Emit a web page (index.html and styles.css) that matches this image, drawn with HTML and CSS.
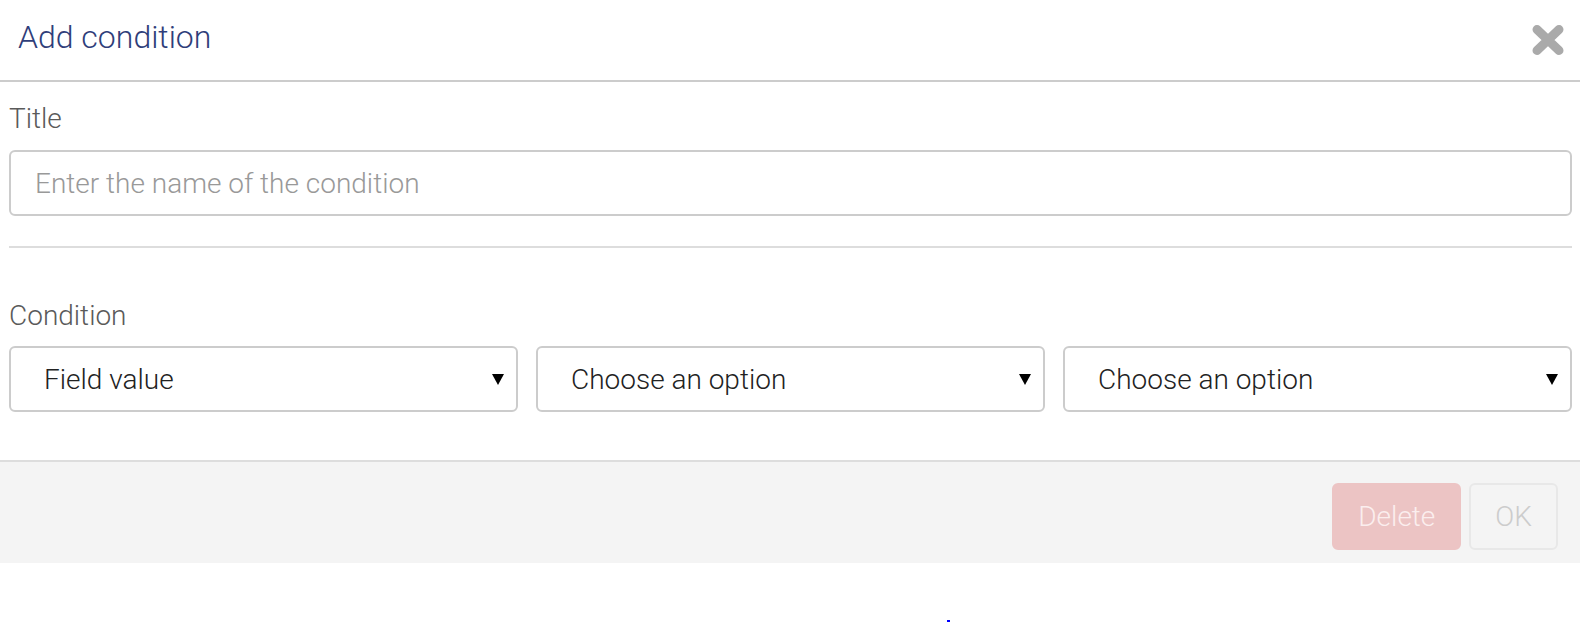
FILE: index.html
```html
<!DOCTYPE html>
<html lang="en">
<head>
  <meta charset="UTF-8">
  <meta name="viewport" content="width=device-width, initial-scale=1.0">
  <title>Add condition</title>
  <link rel="stylesheet" href="styles.css">
</head>
<body>

  <div class="modal">
    <div class="modal-header">
      <h2>Add condition</h2>
      <button class="close" title="Close">
        <svg width="32" height="30" viewBox="0 0 32 30">
          <path d="M5 4.5 L27 25.5 M27 4.5 L5 25.5" stroke="#aaa" stroke-width="9" stroke-linecap="round"/>
        </svg>
      </button>
    </div>

    <div class="modal-body">
      <label class="field-label" for="condTitle">Title</label>
      <input class="field" id="condTitle" type="text" placeholder="Enter the name of the condition">

      <hr class="sep">

      <label class="field-label">Condition</label>
      <div class="selects">
        <div class="select">Field value<span class="arrow"></span></div>
        <div class="select">Choose an option<span class="arrow"></span></div>
        <div class="select">Choose an option<span class="arrow"></span></div>
      </div>
    </div>

    <!-- Tombol bawah -->
    <div class="modal-footer">
      <button class="btn btn-delete">Delete</button>
      <button class="btn btn-ok">OK</button>
    </div>
  </div>

  <a class="dot" href="#"></a>

</body>
</html>
```

FILE: styles.css
```css
body {
  font-family: Roboto, "Noto Sans", sans-serif;
  font-weight: 300;
  margin: 0;
  padding: 0;
  background-color: #fff;
}

.modal-header {
  display: flex;
  align-items: center;
  justify-content: space-between;
  box-sizing: border-box;
  height: 82px;
  padding: 0 16px 6px 18px;
  border-bottom: 2px solid #ccc;
}

.modal-header h2 {
  margin: 0;
  font-size: 32px;
  font-weight: 300;
  color: #2f3e7a;
}

.close {
  background: none;
  border: none;
  padding: 0;
  margin-top: 6px;
  cursor: pointer;
  display: flex;
}

.modal-body {
  padding: 19px 8px 48px 9px;
}

.field-label {
  display: block;
  font-size: 28px;
  line-height: 36px;
  color: #5a5a5a;
}

.field {
  display: block;
  box-sizing: border-box;
  width: 100%;
  height: 66px;
  margin-top: 13px;
  padding: 0 24px;
  border: 2px solid #ccc;
  border-radius: 6px;
  font-family: inherit;
  font-weight: 300;
  font-size: 28px;
  color: #222;
}

.field::placeholder {
  color: #999;
}

.sep {
  border: none;
  border-top: 2px solid #ddd;
  margin: 30px 0 50px;
}

.selects {
  display: grid;
  grid-template-columns: repeat(3, 1fr);
  gap: 18px;
  margin-top: 12px;
}

.select {
  display: flex;
  align-items: center;
  justify-content: space-between;
  box-sizing: border-box;
  height: 66px;
  padding: 0 12px 0 33px;
  border: 2px solid #ccc;
  border-radius: 6px;
  font-size: 28px;
  color: #222;
}

.arrow {
  width: 0;
  height: 0;
  border-left: 6px solid transparent;
  border-right: 6px solid transparent;
  border-top: 11px solid #000;
}

.modal-footer {
  display: flex;
  justify-content: flex-end;
  gap: 8px;
  height: 103px;
  box-sizing: border-box;
  padding: 21px 22px 0 0;
  background-color: #f4f4f4;
  border-top: 2px solid #ddd;
}

.btn {
  height: 67px;
  padding: 0 24px;
  border-radius: 6px;
  font-family: inherit;
  font-weight: 300;
  font-size: 28px;
  cursor: pointer;
}

.btn-delete {
  background-color: #ecc4c4;
  border: 2px solid #ecc4c4;
  color: #fbeeee;
}

.btn-ok {
  background-color: #f4f4f4;
  border: 2px solid #e8e8e8;
  color: #ccc;
}

.dot {
  display: block;
  width: 3px;
  height: 3px;
  margin: 57px 0 0 947px;
  background-color: #00f;
}
```
